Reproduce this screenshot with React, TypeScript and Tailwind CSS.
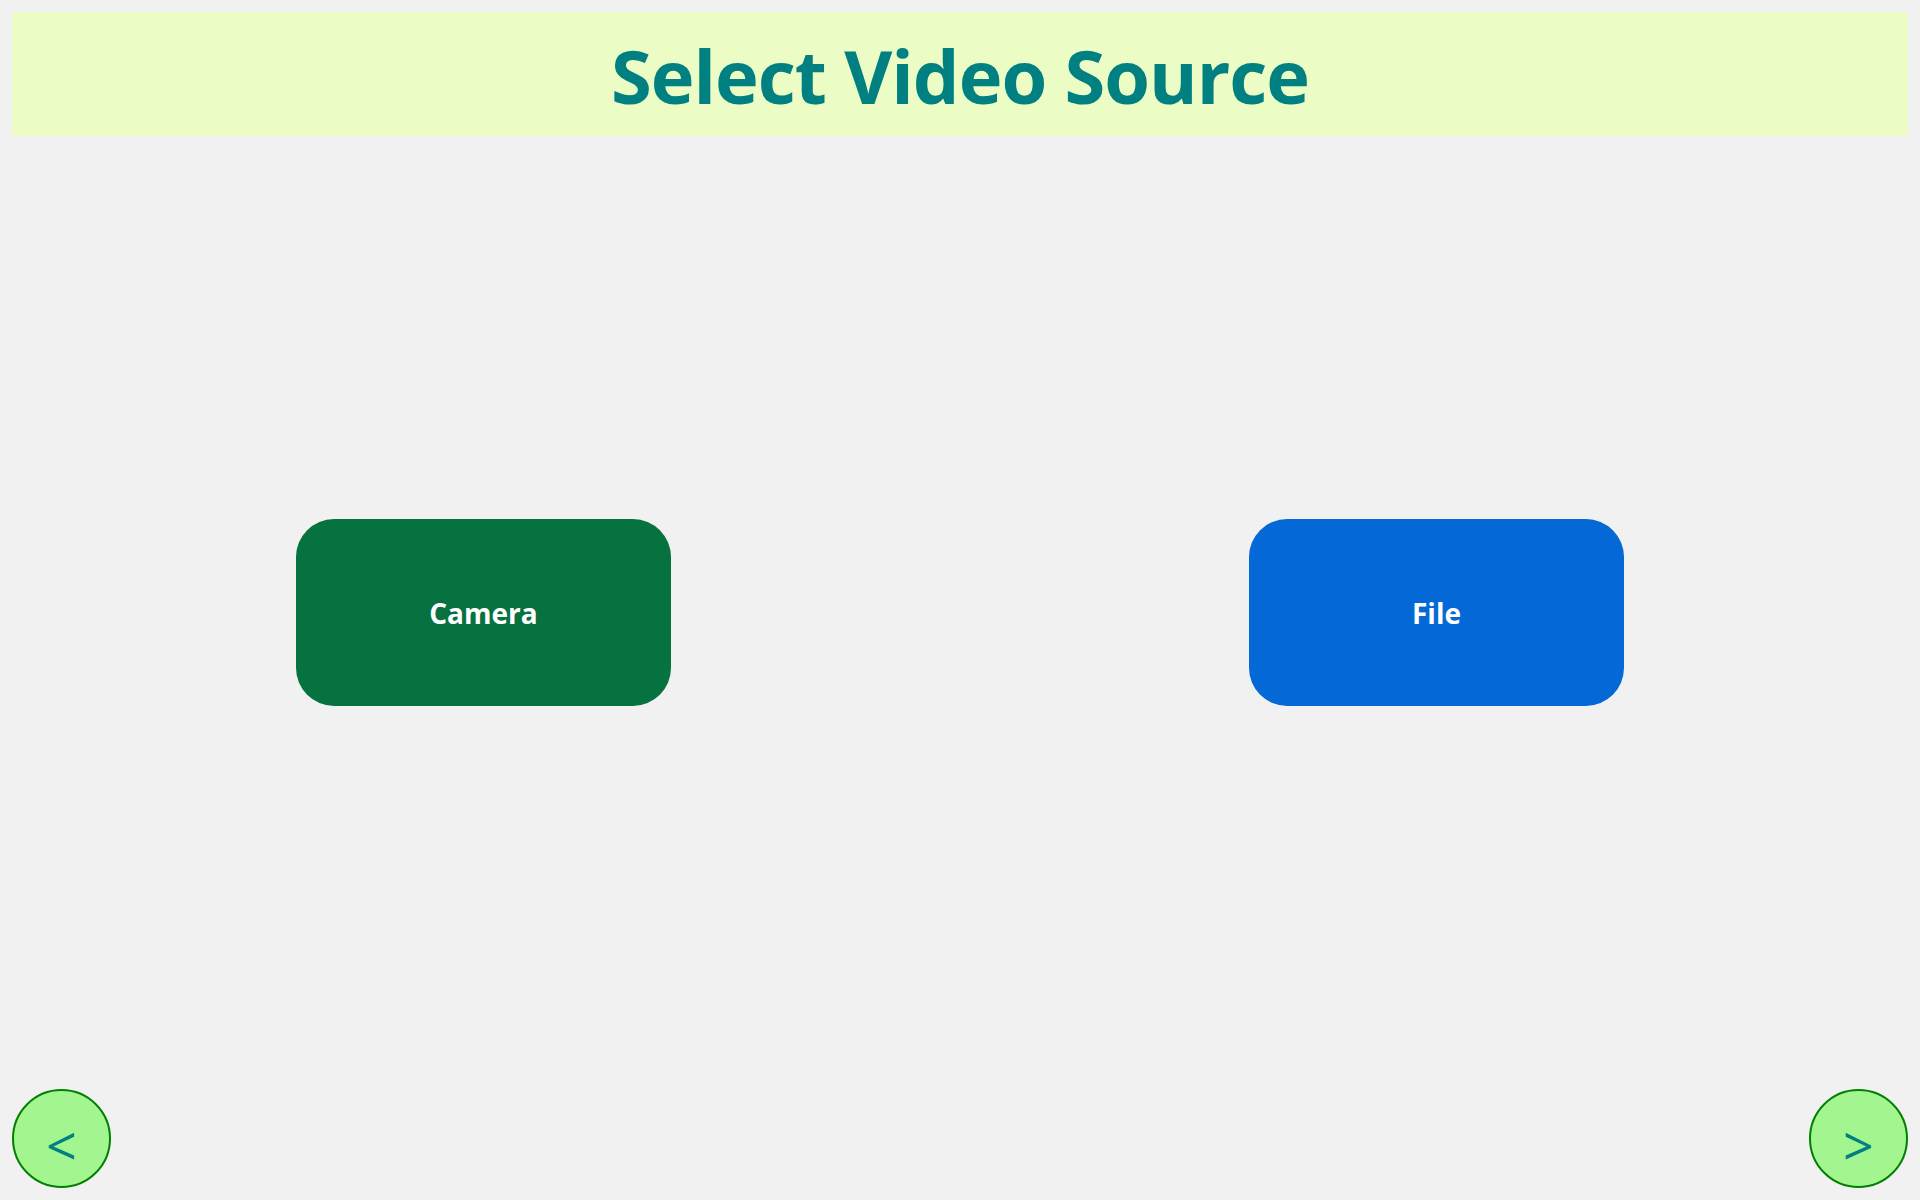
export default function App() {
  return (
    <div
      className="flex h-[1200px] w-full flex-col bg-[#f1f1f1] p-3"
      style={{ fontFamily: '"Open Sans", "Noto Sans", sans-serif' }}
    >
      <header className="flex h-[124px] shrink-0 items-center justify-center bg-[#ebfdc4] pt-1">
        <h1 className="text-[74px] font-bold leading-none tracking-[-1px] text-[#008080]">
          Select Video Source
        </h1>
      </header>

      <main className="flex flex-1 items-center justify-between px-[284px]">
        <button className="flex h-[187px] w-[375px] items-center justify-center rounded-[38px] bg-[#067240] text-[28px] font-bold text-white">
          Camera
        </button>
        <button className="flex h-[187px] w-[375px] items-center justify-center rounded-[38px] bg-[#0469d6] text-[28px] font-bold text-white">
          File
        </button>
      </main>

      <footer className="flex h-[99px] shrink-0 items-center justify-between">
        <button className="flex h-[99px] w-[99px] items-center justify-center rounded-full border-[2.5px] border-[#008000] bg-[#a2f58f] pt-3 text-[54px] leading-none text-[#008080]">
          &lt;
        </button>
        <button className="flex h-[99px] w-[99px] items-center justify-center rounded-full border-[2.5px] border-[#008000] bg-[#a2f58f] pt-3 text-[54px] leading-none text-[#008080]">
          &gt;
        </button>
      </footer>
    </div>
  );
}
